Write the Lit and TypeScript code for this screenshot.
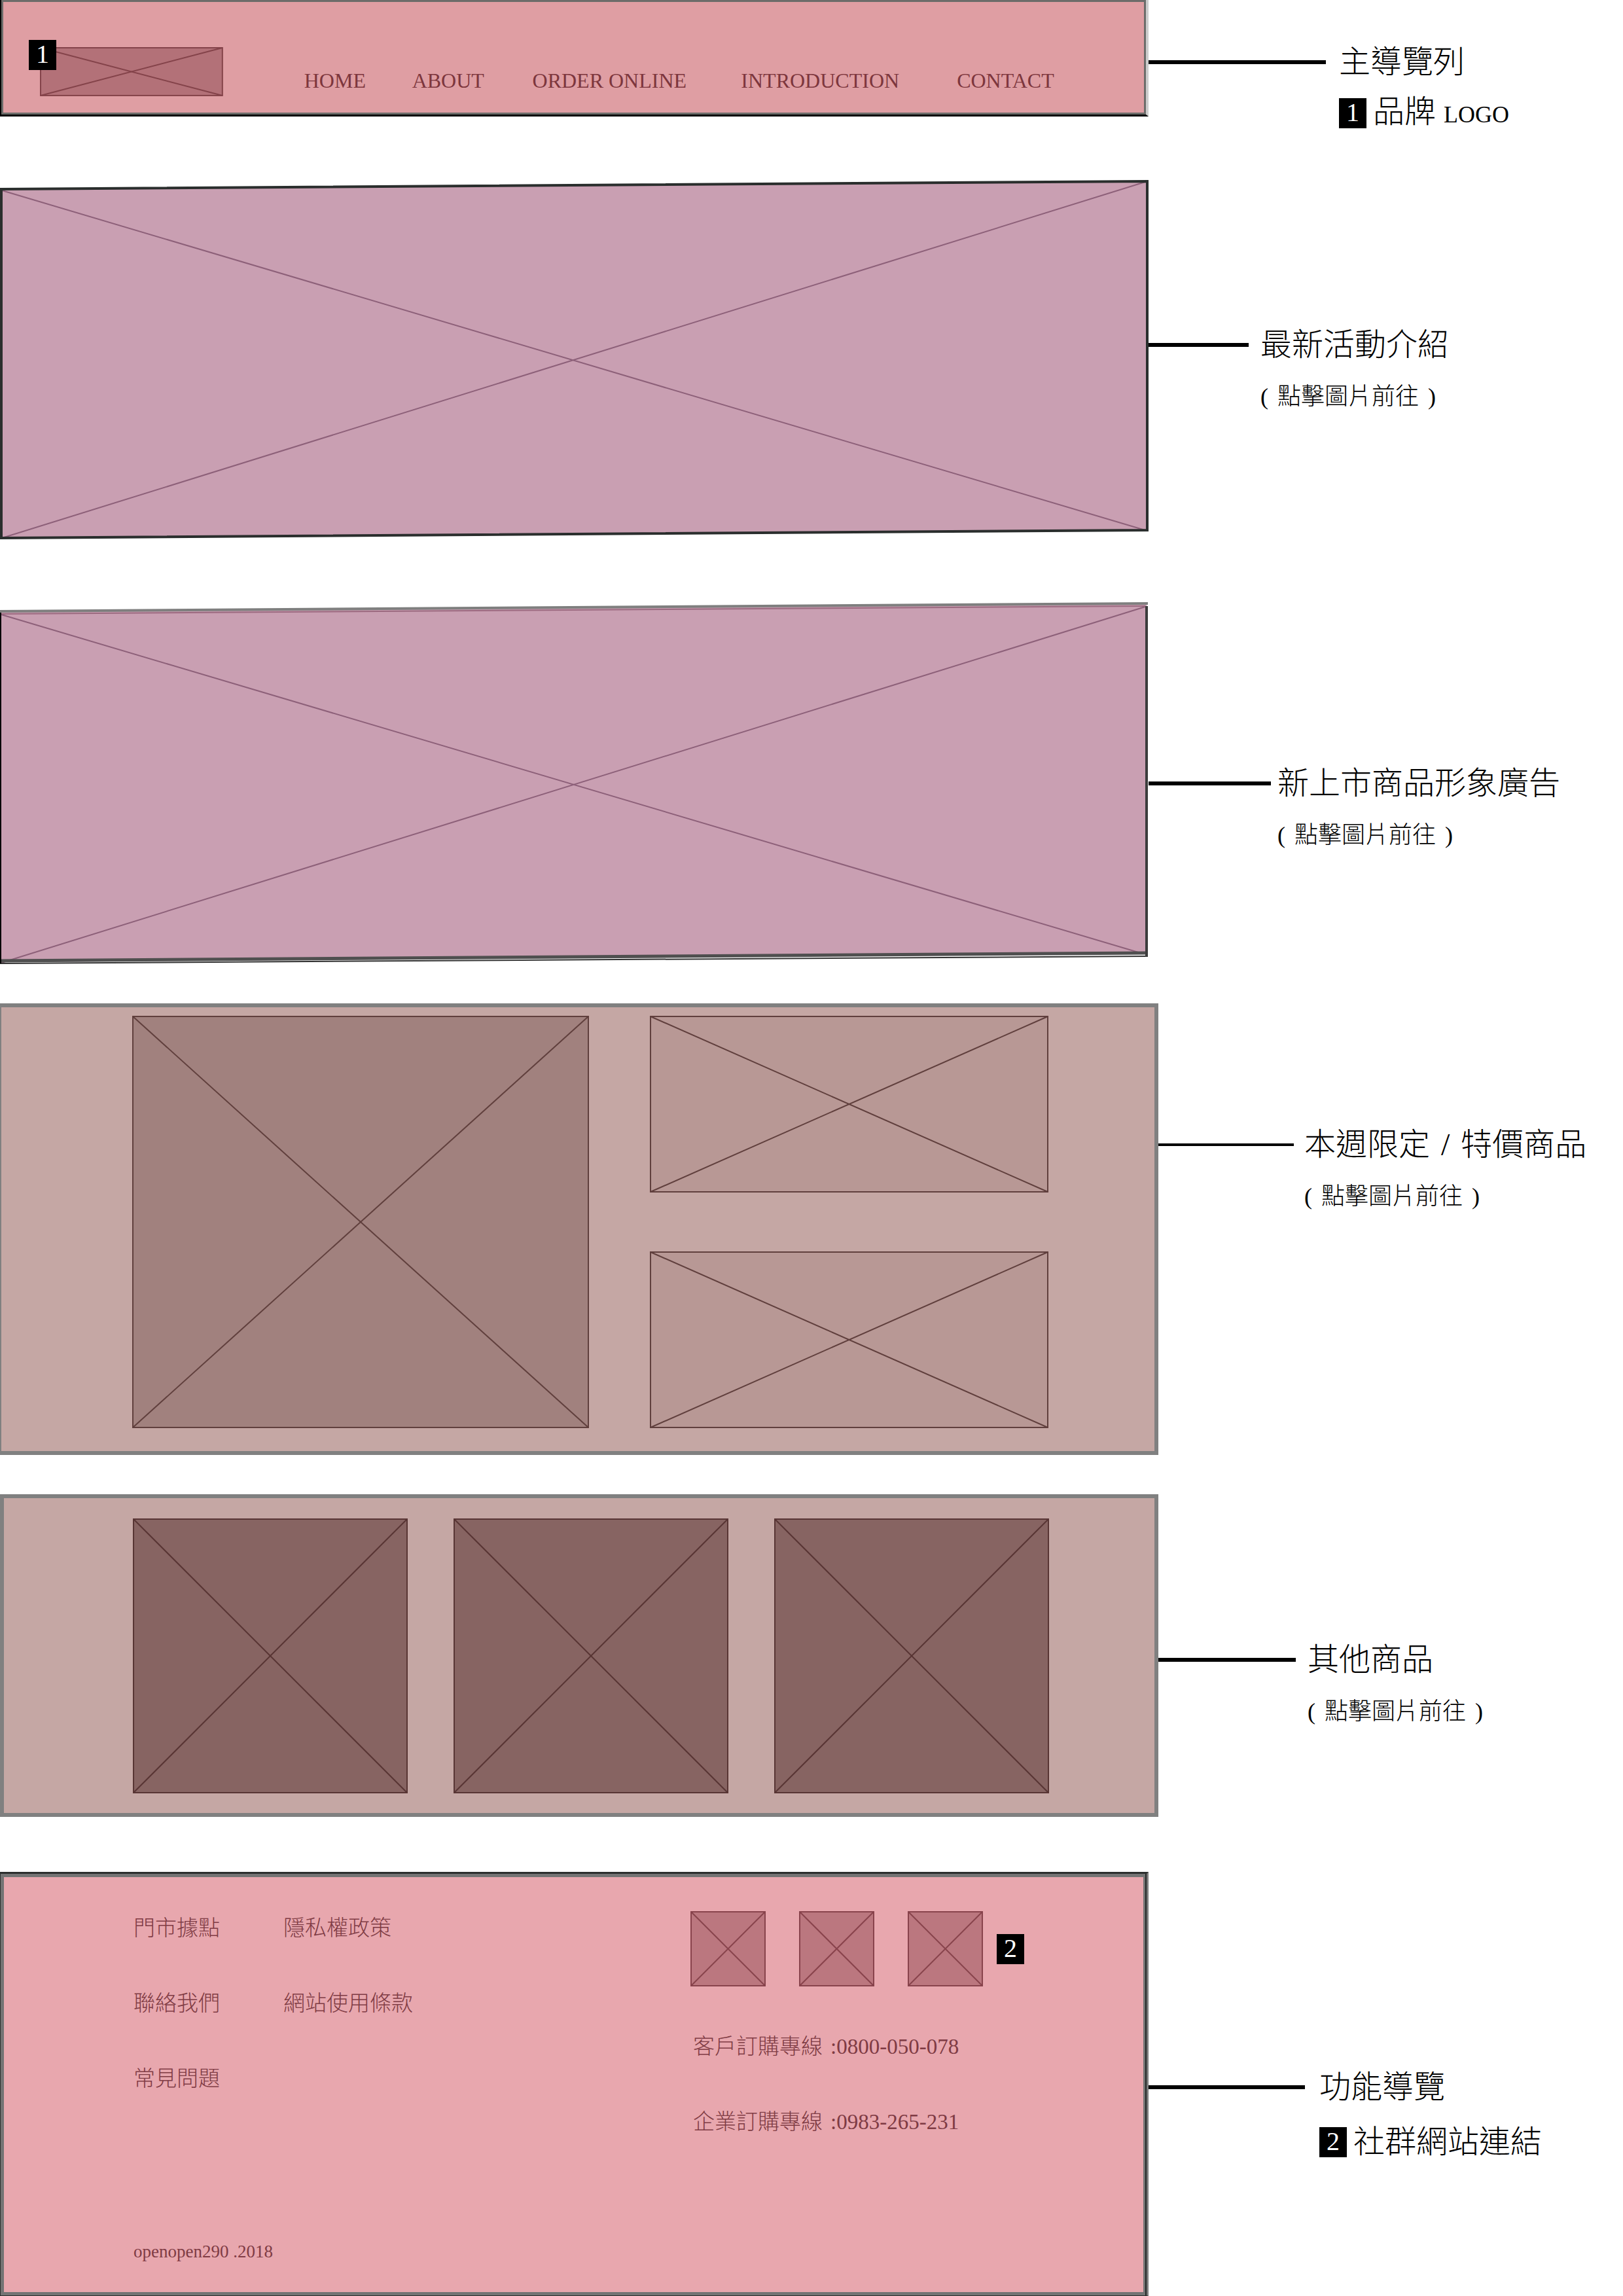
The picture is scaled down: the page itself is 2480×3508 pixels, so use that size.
import { LitElement, html, css, svg, nothing } from "lit";
import { customElement, property } from "lit/decorators.js";

/* Crossed box that stands in for a picture. */
@customElement("picture-box")
class PictureBox extends LitElement {
  @property({ type: Number }) w = 100;
  @property({ type: Number }) h = 100;
  @property() label = "";

  static styles = css`
    :host {
      display: block;
    }
    .link {
      display: block;
    }
    .art {
      display: block;
      width: 100%;
      height: auto;
      overflow: visible;
    }
    .frame {
      fill: var(--box-fill);
      stroke: var(--box-line);
      stroke-width: 2;
    }
    .cross {
      stroke: var(--box-line);
      stroke-width: 2;
    }
  `;

  render() {
    const { w, h } = this;
    return html`<a class="link" href="#" aria-label=${this.label}>
      <svg class="art" viewBox="0 0 ${w} ${h}" aria-hidden="true">
        <rect class="frame" x="1" y="1" width=${w - 2} height=${h - 2} />
        <line class="cross" x1="1" y1="1" x2=${w - 1} y2=${h - 1} />
        <line class="cross" x1="1" y1=${h - 1} x2=${w - 1} y2="1" />
      </svg>
    </a>`;
  }
}

/* Leader line with the name of a page block beside it. */
@customElement("call-out")
class CallOut extends LitElement {
  @property() heading = "";
  @property() badge = "";
  @property() note = "";
  @property() latin = "";
  @property({ type: Boolean }) hint = false;

  static styles = css`
    :host {
      display: grid;
      grid-template-columns: var(--lead) 1fr;
      column-gap: var(--lead-gap, 20px);
      align-content: start;
      align-items: center;
      font-family: "Liberation Serif", "Noto Sans CJK TC", serif;
      font-weight: 300;
      color: #000;
      white-space: nowrap;
    }
    .lead {
      height: var(--lead-size, 6px);
      background: #000;
    }
    .heading {
      display: flex;
      gap: 17px;
      margin: 0;
      font-size: 48px;
      font-weight: 300;
      line-height: 80px;
    }
    .hint {
      grid-column: 2;
      display: flex;
      gap: 14px;
      margin: 0;
      font-size: 36px;
      line-height: 78px;
    }
    .note {
      grid-column: 2;
      display: flex;
      align-items: center;
      gap: 10px;
      height: var(--note-height);
      margin: 0;
      font-size: 48px;
      line-height: 72px;
    }
    .latin {
      font-size: 36px;
    }
    .badge {
      width: 42px;
      height: 46px;
      background: #000;
      color: #fff;
      font-size: 40px;
      line-height: 44px;
      text-align: center;
    }
  `;

  render() {
    return html`
      <span class="lead"></span>
      <h2 class="heading">${this.heading.split(" ").map((t) => html`<span>${t}</span> `)}</h2>
      ${this.hint
        ? html`<p class="hint"><span>(</span> <span>點擊圖片前往</span> <span>)</span></p>`
        : nothing}
      ${this.note
        ? html`<p class="note">
            <span class="badge">${this.badge}</span>
            <span>${this.note}${this.latin ? html` <span class="latin">${this.latin}</span>` : nothing}</span>
          </p>`
        : nothing}
    `;
  }
}

const NAV = ["HOME", "ABOUT", "ORDER ONLINE", "INTRODUCTION", "CONTACT"];
const STORE_LINKS = ["門市據點", "聯絡我們", "常見問題"];
const POLICY_LINKS = ["隱私權政策", "網站使用條款"];
const PHONES = [
  ["客戶訂購專線", "0800-050-078"],
  ["企業訂購專線", "0983-265-231"],
];

const eventArt = svg`
  <polygon points="2,15 1753,3 1753,536 2,548" fill="#c99fb2" />
  <path d="M3 17 L1753 537 M3 548 L1753 3" stroke="#8d6079" stroke-width="2" />
  <polygon points="2,15 1753,3 1753,536 2,548" fill="none" stroke="#2a2e2d" stroke-width="4" />
`;

const launchArt = svg`
  <polygon points="1,14 1752,3 1752,538 1,550" fill="#c99fb2" />
  <path d="M2 19 L1746 537 M2 551 L1750 7" stroke="#8d6079" stroke-width="2" />
  <path d="M2 18 L1750 6" stroke="#9c6a80" stroke-width="2" />
  <path d="M0 14 L1754 2" stroke="#7f7f7f" stroke-width="4" />
  <path d="M0 548 L1754 536" stroke="#4f4f4f" stroke-width="5" />
  <path d="M0 552 L1754 541" stroke="#333" stroke-width="2" />
  <path d="M1 16 V552" stroke="#000" stroke-width="2" />
  <path d="M1752 6 V542" stroke="#3c3c3c" stroke-width="4" />
`;

@customElement("app-root")
class AppRoot extends LitElement {
  static styles = css`
    :host {
      display: block;
      background: #fff;
      font-family: "Liberation Serif", "Noto Sans CJK TC", serif;
      font-weight: 300;
    }
    a {
      color: inherit;
      text-decoration: none;
    }
    ul {
      margin: 0;
      padding: 0;
      list-style: none;
    }
    .row {
      display: grid;
      grid-template-columns: 1755fr 725fr;
      align-items: start;
    }
    .row.wide {
      grid-template-columns: 1770fr 710fr;
    }
    .gap-l {
      margin-top: 96px;
    }
    .gap-m {
      margin-top: 84px;
    }
    .gap-s {
      margin-top: 60px;
    }
    .badge {
      width: 42px;
      height: 46px;
      background: #000;
      color: #fff;
      font-size: 40px;
      line-height: 44px;
      text-align: center;
    }

    .top {
      display: grid;
      grid-template-columns: 59fr 280fr 124fr 1287fr;
      align-items: end;
      padding: 72px 0 28px;
      background: #df9ea3;
      border: solid #000;
      border-width: 0 4px 3px 2px;
      border-right-color: #ccc;
      box-shadow: inset 0 0 0 3px #6c6c6a;
    }
    .logo {
      grid-column: 2;
      position: relative;
      --box-fill: #b37178;
      --box-line: #84434a;
    }
    .logo .badge {
      position: absolute;
      left: -17px;
      top: -11px;
    }
    .nav {
      grid-column: 4;
      display: grid;
      grid-template-columns: 165fr 184fr 319fr 330fr 289fr;
      font-size: 32px;
      line-height: 48px;
      color: #7d363d;
      white-space: nowrap;
    }

    .banner {
      display: block;
    }
    .banner svg {
      display: block;
      width: 100%;
      height: auto;
    }

    .special {
      display: grid;
      grid-template-columns: 200fr 698fr 93fr 609fr 162fr;
      padding: 13px 0 35px;
      background: #c5a7a4;
      border: 6px solid #808080;
      border-left-width: 2px;
      --box-line: #603f3d;
    }
    .feature {
      grid-column: 2;
      --box-fill: #a1817e;
    }
    .pair {
      grid-column: 4;
      display: flex;
      flex-direction: column;
      justify-content: space-between;
      --box-fill: #b89895;
    }

    .others {
      display: grid;
      grid-template-columns: 197fr 420fr 70fr 420fr 70fr 420fr 161fr;
      padding: 31px 0 30px;
      background: #c5a7a4;
      border: 6px solid #808080;
      --box-fill: #876462;
      --box-line: #583534;
    }
    .others picture-box:nth-child(1) {
      grid-column: 2;
    }
    .others picture-box:nth-child(2) {
      grid-column: 4;
    }
    .others picture-box:nth-child(3) {
      grid-column: 6;
    }

    .bottom {
      display: grid;
      grid-template-columns: 203fr 229fr 622fr 697fr;
      padding: 26px 0 39px;
      background: #e8a7ae;
      border: solid #2c2f2e;
      border-width: 3px 3px 1px 1px;
      border-right-color: #7a7a7a;
      box-shadow: inset -2px 0 0 #242827, inset 0 0 0 5px #747474;
      font-size: 33px;
      line-height: 115px;
      color: #7f3b44;
      white-space: nowrap;
    }
    .stores {
      grid-column: 2;
    }
    .contact {
      grid-column: 4;
      padding-top: 31px;
    }
    .social {
      display: flex;
      align-items: center;
      gap: 51px;
      margin-bottom: 35px;
      --box-fill: #bb777f;
      --box-line: #88434c;
    }
    .social picture-box {
      width: 115px;
    }
    .social .badge {
      margin-left: -30px;
    }
    .phones {
      padding-left: 4px;
    }
    .phone {
      display: flex;
      gap: 12px;
    }
    .copyright {
      grid-column: 2 / 4;
      margin: 112px 0 0;
      font-size: 27px;
      line-height: 56px;
    }

    .c-nav {
      --lead: 271px;
      --note-height: 76px;
      padding-top: 55px;
    }
    .c-nav + .gap-l,
    .after-nav {
      margin-top: 63px;
    }
    .c-event {
      --lead: 153px;
      --lead-gap: 18px;
      padding-top: 213px;
    }
    .c-launch {
      --lead: 187px;
      --lead-gap: 10px;
      padding-top: 237px;
    }
    .c-special {
      --lead: 207px;
      --lead-gap: 16px;
      --lead-size: 4px;
      padding-top: 176px;
    }
    .c-others {
      --lead: 210px;
      --lead-gap: 18px;
      padding-top: 213px;
    }
    .c-footer {
      --lead: 239px;
      --lead-gap: 22px;
      --note-height: 88px;
      padding-top: 289px;
    }
  `;

  render() {
    return html`
      <div class="row">
        <header class="top">
          <div class="logo">
            <picture-box w="280" h="75" label="LOGO"></picture-box>
            <span class="badge">1</span>
          </div>
          <nav class="nav">${NAV.map((n) => html`<a href="#">${n}</a>`)}</nav>
        </header>
        <call-out class="c-nav" heading="主導覽列" badge="1" note="品牌" latin="LOGO"></call-out>
      </div>

      <div class="row after-nav">
        <a class="banner" href="#" aria-label="最新活動介紹">
          <svg viewBox="0 0 1755 550" aria-hidden="true">${eventArt}</svg>
        </a>
        <call-out class="c-event" heading="最新活動介紹" hint></call-out>
      </div>

      <div class="row gap-l">
        <a class="banner" href="#" aria-label="新上市商品形象廣告">
          <svg viewBox="0 0 1755 553" aria-hidden="true">${launchArt}</svg>
        </a>
        <call-out class="c-launch" heading="新上市商品形象廣告" hint></call-out>
      </div>

      <div class="row wide gap-s">
        <section class="special">
          <picture-box class="feature" w="698" h="630" label="本週限定"></picture-box>
          <div class="pair">
            <picture-box w="609" h="270" label="特價商品"></picture-box>
            <picture-box w="609" h="270" label="特價商品"></picture-box>
          </div>
        </section>
        <call-out class="c-special" heading="本週限定 / 特價商品" hint></call-out>
      </div>

      <div class="row wide gap-s">
        <section class="others">
          ${[1, 2, 3].map(() => html`<picture-box w="420" h="420" label="其他商品"></picture-box>`)}
        </section>
        <call-out class="c-others" heading="其他商品" hint></call-out>
      </div>

      <div class="row gap-m">
        <footer class="bottom">
          <ul class="stores">
            ${STORE_LINKS.map((t) => html`<li><a href="#">${t}</a></li>`)}
          </ul>
          <ul>
            ${POLICY_LINKS.map((t) => html`<li><a href="#">${t}</a></li>`)}
          </ul>
          <div class="contact">
            <div class="social">
              ${[1, 2, 3].map(() => html`<picture-box w="115" h="115" label="社群網站"></picture-box>`)}
              <span class="badge">2</span>
            </div>
            <ul class="phones">
              ${PHONES.map(
                ([k, v]) => html`<li class="phone"><span>${k}</span> <span>:<a href="tel:${v}">${v}</a></span></li>`
              )}
            </ul>
          </div>
          <p class="copyright">openopen290 .2018</p>
        </footer>
        <call-out class="c-footer" heading="功能導覽" badge="2" note="社群網站連結"></call-out>
      </div>
    `;
  }
}
